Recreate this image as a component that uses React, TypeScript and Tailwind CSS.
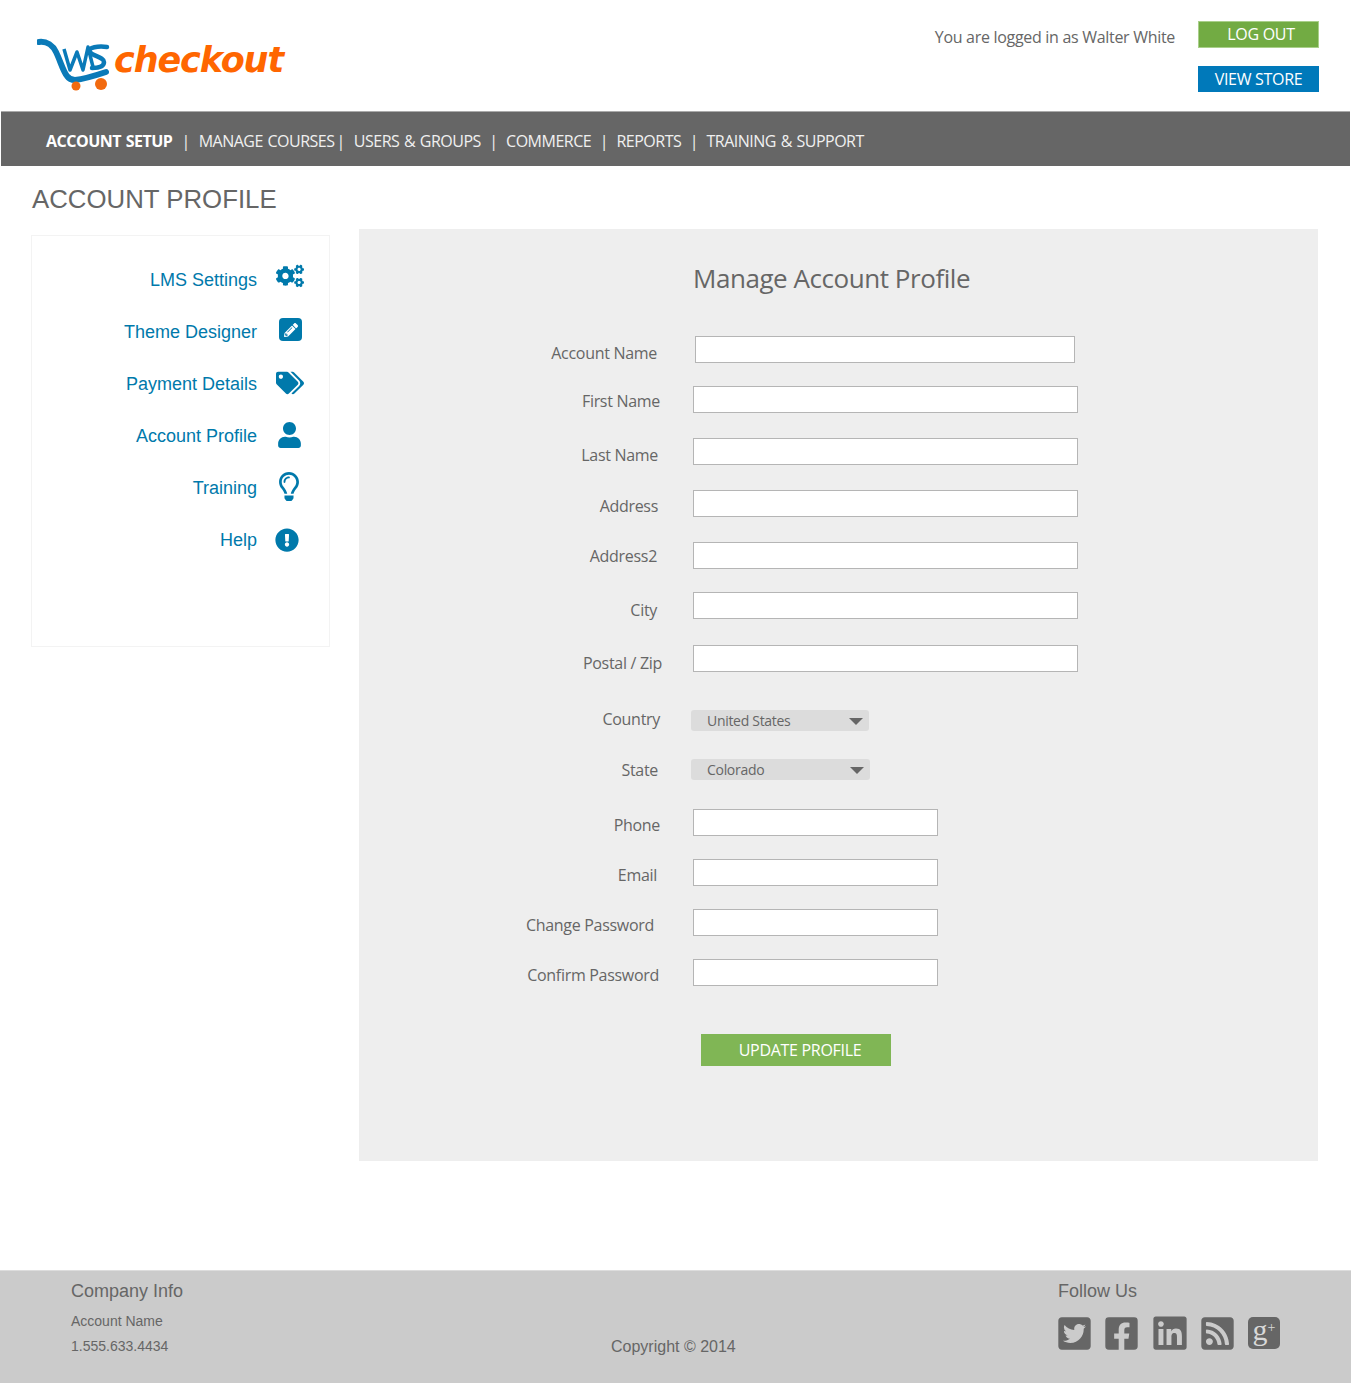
import { FaCogs, FaPencilAlt, FaTags, FaUser, FaRegLightbulb, FaExclamationCircle, FaTwitterSquare, FaFacebookSquare, FaLinkedin, FaRssSquare } from "react-icons/fa";

const droid = "font-['Open_Sans',sans-serif] tracking-[-0.3px]";

const navItems = [
  { label: "ACCOUNT SETUP", cls: "font-bold text-white" },
  { label: "MANAGE COURSES", cls: "" },
  { label: "USERS & GROUPS", cls: "" },
  { label: "COMMERCE", cls: "" },
  { label: "REPORTS", cls: "" },
  { label: "TRAINING & SUPPORT", cls: "" },
];

const sideLinks = [
  { label: "LMS Settings", icon: <FaCogs className="w-7 h-7" />, cls: "ml-[19px] -mt-[5px]" },
  {
    label: "Theme Designer",
    icon: (
      <span className="w-[23px] h-[23px] rounded-[4px] bg-[#0079ab] flex items-center justify-center">
        <FaPencilAlt className="w-[14px] h-[14px] text-white" />
      </span>
    ),
    cls: "ml-[22px] -mt-[1px]",
  },
  { label: "Payment Details", icon: <FaTags className="w-7 h-7" />, cls: "ml-[19px] -mt-[2px]" },
  { label: "Account Profile", icon: <FaUser className="w-[25px] h-[26px]" />, cls: "ml-[20px] -mt-[1px]" },
  { label: "Training", icon: <FaRegLightbulb className="w-[26px] h-[29px]" />, cls: "ml-[19px] -mt-[3px]" },
  { label: "Help", icon: <FaExclamationCircle className="w-6 h-6" />, cls: "ml-[18px] mt-[1px]" },
];

// offsets are uneven in the picture, so every row carries its own numbers
const rows = [
  { label: "Account Name", row: "mt-[42px]", lab: "w-[298px] pt-[6px]", input: "ml-[38px] w-[380px]" },
  { label: "First Name", row: "mt-[23px]", lab: "w-[301px] pt-[4px]", input: "ml-[33px] w-[385px]" },
  { label: "Last Name", row: "mt-[25px]", lab: "w-[299px] pt-[6px]", input: "ml-[35px] w-[385px]" },
  { label: "Address", row: "mt-[25px]", lab: "w-[299px] pt-[5px]", input: "ml-[35px] w-[385px]" },
  { label: "Address2", row: "mt-[25px]", lab: "w-[298px] pt-[3px]", input: "ml-[36px] w-[385px]" },
  { label: "City", row: "mt-[23px]", lab: "w-[298px] pt-[7px]", input: "ml-[36px] w-[385px]" },
  { label: "Postal / Zip", row: "mt-[26px]", lab: "w-[303px] pt-[7px]", input: "ml-[31px] w-[385px]" },
  { label: "Phone", row: "mt-[29px]", lab: "w-[301px] pt-[5px]", input: "ml-[33px] w-[245px]" },
  { label: "Email", row: "mt-[23px]", lab: "w-[298px] pt-[5px]", input: "ml-[36px] w-[245px]" },
  { label: "Change Password", row: "mt-[23px]", lab: "w-[295px] pt-[5px]", input: "ml-[39px] w-[245px]" },
  { label: "Confirm Password", row: "mt-[23px]", lab: "w-[300px] pt-[5px]", input: "ml-[34px] w-[245px]" },
];

const FormRow = ({ r }: { r: (typeof rows)[number] }) => (
  <div className={`flex items-start h-[27px] ${r.row}`}>
    <label className={`text-right text-[16px] leading-[22px] text-[#666] whitespace-nowrap ${r.lab}`}>{r.label}</label>
    <input className={`h-[27px] bg-white border border-[#b5b5b5] ${r.input}`} />
  </div>
);

const SelectRow = ({ label, value, row, lab, box }: { label: string; value: string; row: string; lab: string; box: string }) => (
  <div className={`flex items-start h-[21px] ${row}`}>
    <label className={`text-right text-[16px] leading-[22px] text-[#666] ${lab}`}>{label}</label>
    <div className={`h-[21px] bg-[#dcdcdc] rounded-[3px] flex items-center justify-between pl-4 pr-[6px] text-[14px] text-[#666] ${box}`}>
      <span>{value}</span>
      <span className="w-0 h-0 border-x-[7px] border-x-transparent border-t-[7px] border-t-[#666] mt-[1px]" />
    </div>
  </div>
);

const Logo = () => (
  <div className="flex items-start">
    <svg width="74" height="56" viewBox="0 0 74 56" fill="none">
      <path d="M2 4C10 3 16 8 19 14C23 22 26 33 30 38C32 41 35 42 38 42C48 41 60 37 69 34" stroke="#0a7ab8" strokeWidth="6" strokeLinecap="round" strokeLinejoin="round" />
      <path d="M27 11L33 32L40 14L46 32L51 9L56 29" stroke="#0a7ab8" strokeWidth="3.5" strokeLinejoin="round" />
      <path d="M70 9C62 8 50 9 53 14C55 18 67 19 67 24C67 29 60 30 55 30" stroke="#0a7ab8" strokeWidth="4.5" strokeLinecap="round" />
      <circle cx="39" cy="48" r="4.5" fill="#f26a0f" />
      <circle cx="64" cy="46" r="6" fill="#f26a0f" />
    </svg>
    <span className="ml-[3px] -mt-[2px] font-['DejaVu_Sans',sans-serif] font-bold italic text-[35px] leading-[48px] tracking-[-1.1px] text-[#ff6600]">checkout</span>
  </div>
);

const socialCls = "w-[37px] h-[37px]";

export default function App() {
  return (
    <div className={`w-[1351px] h-[1385px] bg-white ${droid}`}>
      <header className="h-[111px] flex justify-between">
        <div className="pl-[37px] pt-[38px]">
          <Logo />
        </div>
        <div className="flex pt-[21px] pr-[32px]">
          <div className="pt-[4px] mr-[23px] text-[16px] leading-[24px] text-[#666]">You are logged in as Walter White</div>
          <div className="flex flex-col items-start">
            <a className="w-[121px] h-[27px] pl-[5px] bg-[#72ab43] border border-[#a9cf8a] text-white text-[16px] leading-[24px] text-center">LOG OUT</a>
            <a className="mt-[18px] w-[121px] h-[26px] bg-[#0079ba] text-white text-[16px] leading-[26px] text-center">VIEW STORE</a>
          </div>
        </div>
      </header>

      <nav className="ml-[1px] w-[1349px] h-[55px] bg-[#666] border-t border-[#aaa] flex items-center pl-[45px] pt-[3px] text-[16px] tracking-[-0.5px] [word-spacing:1px] text-[#f0f0f0]">
        {navItems.map((n, i) => (
          <span key={n.label} className="flex items-center">
            {i > 0 && <span className={i === 1 ? "mx-[9px]" : i === 2 ? "ml-[2px] mr-[9px]" : "mx-[8.5px]"}>|</span>}
            <span className={n.cls}>{n.label}</span>
          </span>
        ))}
      </nav>

      <h1 className="pl-[32px] pt-[16px] font-['Liberation_Sans',sans-serif] tracking-normal text-[25.8px] leading-[34px] text-[#666]">ACCOUNT PROFILE</h1>

      <div className="flex items-start">
        <aside className="ml-[31px] mt-[19px] w-[299px] h-[412px] border border-[#f3f3f3] pt-[31px] font-['Liberation_Sans',sans-serif] tracking-normal text-[#0079ab] text-[18px]">
          {sideLinks.map((s) => (
            <div key={s.label} className="h-[52px] flex items-start justify-end pr-[24px]">
              <a className="leading-[26px]">{s.label}</a>
              <span className="w-[48px] flex items-start">
                <span className={s.cls}>{s.icon}</span>
              </span>
            </div>
          ))}
        </aside>

        <main className="ml-[29px] mt-[13px] w-[959px] h-[932px] bg-[#eeeeee] pt-[33px]">
          <h2 className="pl-[334px] text-[26px] leading-[32px] tracking-[-0.45px] text-[#666]">Manage Account Profile</h2>
          {rows.slice(0, 7).map((r) => (
            <FormRow key={r.label} r={r} />
          ))}
          <SelectRow label="Country" value="United States" row="mt-[38px]" lab="w-[301px] -mt-[2px]" box="ml-[31px] w-[178px]" />
          <SelectRow label="State" value="Colorado" row="mt-[28px]" lab="w-[299px]" box="ml-[33px] w-[179px]" />
          {rows.slice(7).map((r) => (
            <FormRow key={r.label} r={r} />
          ))}
          <button className="block ml-[342px] mt-[48px] w-[190px] h-[32px] pl-[8px] bg-[#80b655] text-white text-[16px]">UPDATE PROFILE</button>
        </main>
      </div>

      <footer className="mt-[109px] w-[1351px] h-[113px] bg-[#cbcbcb] border-t border-[#ddd] flex font-['Liberation_Sans',sans-serif] tracking-normal text-[#666]">
        <div className="pl-[71px] pt-[9px] w-[611px]">
          <div className="text-[18px] leading-[22px]">Company Info</div>
          <div className="mt-[11px] text-[14px] leading-[16px]">Account Name</div>
          <div className="mt-[9px] text-[14px] leading-[16px]">1.555.633.4434</div>
        </div>
        <div className="w-[447px] pt-[66px] text-[16px] leading-[20px]">Copyright © 2014</div>
        <div className="pt-[9px]">
          <div className="text-[18px] leading-[22px]">Follow Us</div>
          <div className="mt-[12px] flex items-center gap-[10.25px] -ml-[2px]">
            <FaTwitterSquare className={socialCls} />
            <FaFacebookSquare className={socialCls} />
            <FaLinkedin className="w-[38px] h-[38px]" />
            <FaRssSquare className={socialCls} />
            <span className="ml-[2px] w-[32px] h-[32px] rounded-[5px] bg-[#666] text-[#d8d8d8] flex items-start justify-center font-['Liberation_Serif',serif] text-[30px] leading-[26px]">
              g<span className="text-[14px] leading-[22px]">+</span>
            </span>
          </div>
        </div>
      </footer>
    </div>
  );
}
